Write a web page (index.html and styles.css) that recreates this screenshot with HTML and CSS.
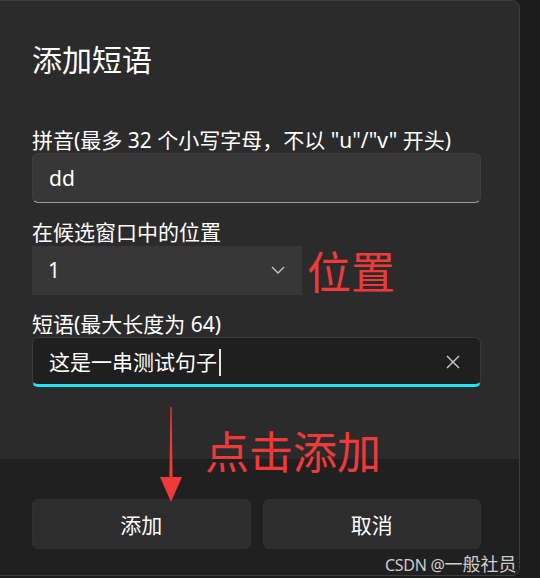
FILE: index.html
```html
<!DOCTYPE html>
<html lang="zh-CN">
<head>
<meta charset="utf-8">
<title>添加短语</title>
<link rel="stylesheet" href="styles.css">
</head>
<body>
<div class="dialog">
  <div class="dialog-body">
    <h1 class="title">添加短语</h1>
    <div class="field">
      <label class="label">拼音(最多 32 个小写字母，不以 "u"/"v" 开头)</label>
      <div class="textbox"><span class="value">dd</span></div>
    </div>
    <div class="field">
      <label class="label">在候选窗口中的位置</label>
      <div class="combo-row">
        <div class="combo">
          <span class="value">1</span>
          <svg class="chevron" width="14" height="8" viewBox="0 0 14 8"><polyline points="1,1 7,7 13,1" fill="none" stroke="#c9c9c9" stroke-width="1.3"/></svg>
        </div>
        <span class="note note-pos">位置</span>
      </div>
    </div>
    <div class="field">
      <label class="label">短语(最大长度为 64)</label>
      <div class="textbox focused">
        <span class="value">这是一串测试句子</span><span class="caret"></span>
        <svg class="clear" width="14" height="14" viewBox="0 0 14 14"><path d="M1 1 L13 13 M13 1 L1 13" stroke="#cfcfcf" stroke-width="1.4" fill="none"/></svg>
      </div>
    </div>
  </div>
  <div class="dialog-footer">
    <button class="btn">添加</button>
    <button class="btn">取消</button>
  </div>
  <span class="note note-click">点击添加</span>
  <svg class="arrow" width="24" height="96" viewBox="0 0 24 96"><polygon points="11.4,0 12.6,0 13.6,70 23,70 12,95 1,70 10.4,70" fill="#f03a3a"/></svg>
</div>
<div class="watermark"><span class="wm-latin">CSDN @</span>一般社员</div>
</body>
</html>
```
FILE: styles.css
```css
* { box-sizing: border-box; }
html, body { margin: 0; padding: 0; }
body {
  background: #1b1b1b;
  width: 540px;
  height: 578px;
  overflow: hidden;
  position: relative;
  font-family: "Noto Sans", "Noto Sans CJK SC", sans-serif;
  color: #ffffff;
}
.dialog {
  position: relative;
  width: 520px;
  height: 576px;
  border: 1px solid #3d3d3d;
  border-left: none;
  border-radius: 0 8px 8px 0;
  overflow: hidden;
  display: flex;
  flex-direction: column;
  background: #2b2b2b;
}
.dialog-body {
  height: 458px;
  padding: 37px 38px 0 32px;
  display: flex;
  flex-direction: column;
}
.title {
  margin: 0 0 49px;
  font-size: 30px;
  font-weight: 400;
  line-height: 40px;
  font-family: "Noto Sans CJK SC", sans-serif;
}
.field { display: flex; flex-direction: column; margin-bottom: 16px; }
.label {
  font-size: 21px;
  line-height: 26px;
  height: 26px;
  white-space: nowrap;
}
.textbox {
  height: 50px;
  border: 1px solid #3e3e3e;
  border-bottom: 1px solid #9c9c9c;
  border-radius: 6px;
  background: #373737;
  display: flex;
  align-items: center;
  padding: 0 16px;
  font-size: 21px;
}
.textbox .value { line-height: 28px; }
.textbox.focused {
  background: #1f1f1f;
  border: 1px solid #3a3a3a;
  border-bottom: 3px solid #22e6f4;
  padding-top: 2px;
}
.caret {
  width: 2px;
  height: 27px;
  background: #e6e6e6;
  margin-left: 2px;
}
.clear { margin-left: auto; margin-right: 4px; }
.combo-row { display: flex; align-items: center; }
.combo {
  width: 270px;
  height: 49px;
  background: #373737;
  display: flex;
  align-items: center;
  padding: 0 16px;
  font-size: 21px;
}
.chevron { margin-left: auto; margin-right: 1px; }
.note {
  color: #f03a3a;
  font-family: "Noto Sans CJK SC", sans-serif;
  font-size: 44px;
  line-height: 50px;
}
.note-pos { margin-left: 5px; }
.dialog-footer {
  flex: 1;
  background: #202020;
  padding: 40px 38px 0 32px;
  display: grid;
  grid-template-columns: 1fr 1fr;
  column-gap: 12px;
  align-content: start;
}
.btn {
  height: 50px;
  border: 1px solid #303030;
  border-radius: 6px;
  background: #2d2d2d;
  color: #ffffff;
  font-family: "Noto Sans CJK SC", sans-serif;
  font-size: 21px;
  padding: 0;
}
.note-click {
  position: absolute;
  left: 205px;
  top: 424px;
}
.arrow {
  position: absolute;
  left: 159px;
  top: 406px;
}
.watermark {
  position: absolute;
  left: 385px;
  top: 550px;
  font-size: 18px;
  line-height: 26px;
  color: #cdcdcd;
  font-family: "Noto Sans CJK SC", sans-serif;
  white-space: nowrap;
}
.wm-latin {
  font-family: "Noto Sans", sans-serif;
  font-size: 16px;
  letter-spacing: -0.3px;
}
```
